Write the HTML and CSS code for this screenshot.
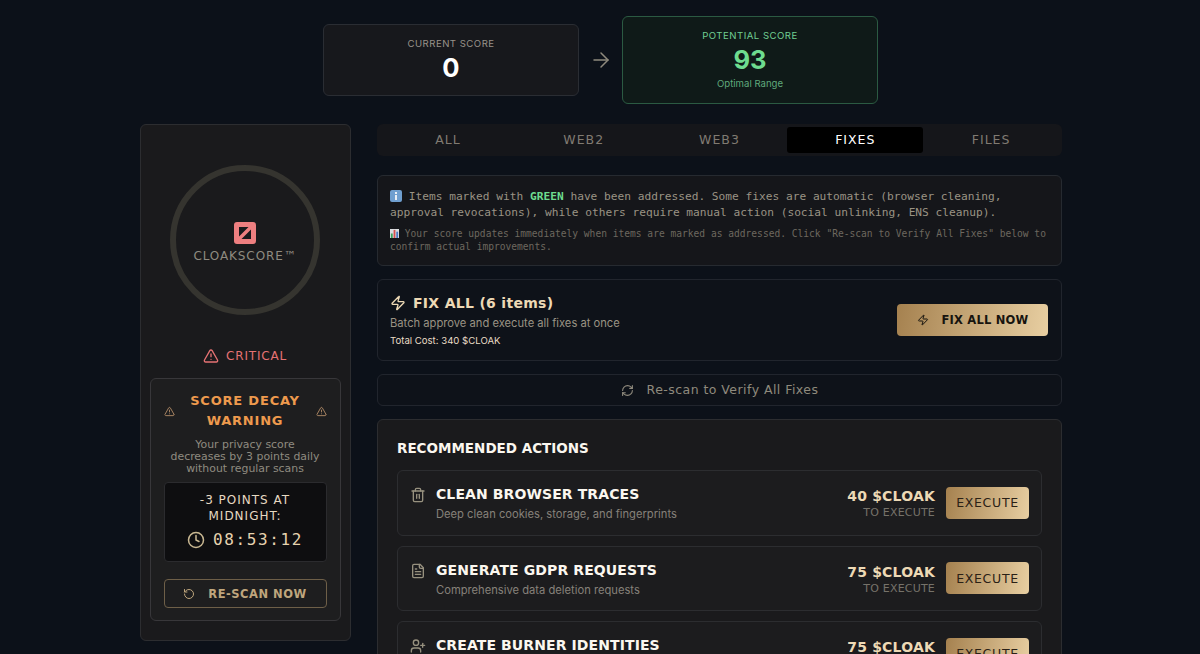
FILE: index.html
```html
<!DOCTYPE html>
<html lang="en">
<head>
<meta charset="utf-8">
<title>CloakScore</title>
<link rel="stylesheet" href="styles.css">
</head>
<body>
<svg class="defs" width="0" height="0" aria-hidden="true">
  <symbol id="zap" viewBox="0 0 24 24"><path d="M4 14a1 1 0 0 1-.78-1.63l9.9-10.2a.5.5 0 0 1 .86.46l-1.92 6.02A1 1 0 0 0 13 10h7a1 1 0 0 1 .78 1.63l-9.9 10.2a.5.5 0 0 1-.86-.46l1.92-6.02A1 1 0 0 0 11 14z"/></symbol>
  <symbol id="alert" viewBox="0 0 24 24"><path d="m21.73 18-8-14a2 2 0 0 0-3.48 0l-8 14A2 2 0 0 0 4 21h16a2 2 0 0 0 1.73-3"/><path d="M12 9v4"/><path d="M12 17h.01"/></symbol>
  <symbol id="ccw" viewBox="0 0 24 24"><path d="M3 12a9 9 0 1 0 9-9 9.75 9.75 0 0 0-6.74 2.74L3 8"/><path d="M3 3v5h5"/></symbol>
</svg>
<main class="page">
  <section class="scores">
    <div class="score-card">
      <div class="score-label">CURRENT SCORE</div>
      <div class="score-value">0</div>
    </div>
    <svg class="icon arrow" viewBox="0 0 24 24"><path d="M5 12h14"/><path d="m12 5 7 7-7 7"/></svg>
    <div class="score-card potential">
      <div class="score-label">POTENTIAL SCORE</div>
      <div class="score-value">93</div>
      <div class="score-note">Optimal Range</div>
    </div>
  </section>

  <div class="columns">
    <aside class="side">
      <div class="ring">
        <div class="logo"><svg viewBox="0 0 22 22"><path class="logo-cut" d="M5 5h9.5L5 14.5zM17 7.500V17H7.500z"/></svg></div>
        <div class="ring-label">CLOAKSCORE™</div>
      </div>
      <div class="status"><svg class="icon status-icon"><use href="#alert"/></svg><span>CRITICAL</span></div>
      <div class="decay">
        <div class="decay-head">
          <svg class="icon decay-icon"><use href="#alert"/></svg>
          <h3>SCORE DECAY WARNING</h3>
          <svg class="icon decay-icon"><use href="#alert"/></svg>
        </div>
        <p class="decay-text">Your privacy score<br>decreases by 3 points daily<br>without regular scans</p>
        <div class="timer-box">
          <div class="timer-label">-3 POINTS AT MIDNIGHT:</div>
          <div class="timer">
            <svg class="icon clock" viewBox="0 0 24 24"><circle cx="12" cy="12" r="10"/><polyline points="12 6 12 12 16 14"/></svg>
            <span>08:53:12</span>
          </div>
        </div>
        <button class="rescan-now"><svg class="icon rescan-icon"><use href="#ccw"/></svg><span>RE-SCAN NOW</span></button>
      </div>
    </aside>

    <div class="content">
      <nav class="tabs">
        <div class="tab">ALL</div>
        <div class="tab">WEB2</div>
        <div class="tab">WEB3</div>
        <div class="tab active">FIXES</div>
        <div class="tab">FILES</div>
      </nav>

      <div class="info">
        <p class="info-main"><svg class="emoji" viewBox="0 0 12 12"><rect width="12" height="12" rx="2" fill="#6f9fd0"/><rect x="5" y="2" width="2" height="2" fill="#e8eef5"/><rect x="5" y="5" width="2" height="5" fill="#e8eef5"/></svg> Items marked with <strong>GREEN</strong> have been addressed. Some fixes are automatic (browser cleaning, approval revocations), while others require manual action (social unlinking, ENS cleanup).</p>
        <p class="info-sub"><svg class="emoji small" viewBox="0 0 10 10"><rect width="10" height="10" fill="#d9dde0"/><rect x="1" y="5" width="2" height="5" fill="#3aa35c"/><rect x="4" y="1" width="2" height="9" fill="#d8504e"/><rect x="7" y="3" width="2" height="7" fill="#4a79c4"/></svg> Your score updates immediately when items are marked as addressed. Click "Re-scan to Verify All Fixes" below to confirm actual improvements.</p>
      </div>

      <div class="fixall">
        <div class="fixall-text">
          <h2><svg class="icon fixall-icon"><use href="#zap"/></svg>FIX ALL (6 items)</h2>
          <p class="fixall-desc">Batch approve and execute all fixes at once</p>
          <p class="fixall-cost">Total Cost: 340 $CLOAK</p>
        </div>
        <button class="gold fixall-btn"><svg class="icon fixbtn-icon"><use href="#zap"/></svg><span>FIX ALL NOW</span></button>
      </div>

      <button class="verify">
        <svg class="icon verify-icon" viewBox="0 0 24 24"><path d="M3 12a9 9 0 0 1 9-9 9.75 9.75 0 0 1 6.74 2.74L21 8"/><path d="M21 3v5h-5"/><path d="M21 12a9 9 0 0 1-9 9 9.75 9.750 0 0 1-6.74-2.74L3 16"/><path d="M8 16H3v5"/></svg>
        <span>Re-scan to Verify All Fixes</span>
      </button>

      <section class="actions">
        <h2 class="actions-title">RECOMMENDED ACTIONS</h2>
        <div class="action">
          <svg class="icon action-icon" viewBox="0 0 24 24"><path d="M3 6h18"/><path d="M19 6v14c0 1-1 2-2 2H7c-1 0-2-1-2-2V6"/><path d="M8 6V4c0-1 1-2 2-2h4c1 0 2 1 2 2v2"/><line x1="10" x2="10" y1="11" y2="17"/><line x1="14" x2="14" y1="11" y2="17"/></svg>
          <div class="action-text"><h4>CLEAN BROWSER TRACES</h4><p>Deep clean cookies, storage, and fingerprints</p></div>
          <div class="price"><b>40 $CLOAK</b><small>TO EXECUTE</small></div>
          <button class="gold execute">EXECUTE</button>
        </div>
        <div class="action">
          <svg class="icon action-icon" viewBox="0 0 24 24"><path d="M15 2H6a2 2 0 0 0-2 2v16a2 2 0 0 0 2 2h12a2 2 0 0 0 2-2V7Z"/><path d="M14 2v4a2 2 0 0 0 2 2h4"/><path d="M10 9H8"/><path d="M16 13H8"/><path d="M16 17H8"/></svg>
          <div class="action-text"><h4>GENERATE GDPR REQUESTS</h4><p>Comprehensive data deletion requests</p></div>
          <div class="price"><b>75 $CLOAK</b><small>TO EXECUTE</small></div>
          <button class="gold execute">EXECUTE</button>
        </div>
        <div class="action">
          <svg class="icon action-icon" viewBox="0 0 24 24"><path d="M16 21v-2a4 4 0 0 0-4-4H6a4 4 0 0 0-4 4v2"/><circle cx="9" cy="7" r="4"/><line x1="19" x2="19" y1="8" y2="14"/><line x1="22" x2="16" y1="11" y2="11"/></svg>
          <div class="action-text"><h4>CREATE BURNER IDENTITIES</h4><p>Fresh aliases and wallets</p></div>
          <div class="price"><b>75 $CLOAK</b><small>TO EXECUTE</small></div>
          <button class="gold execute">EXECUTE</button>
        </div>
      </section>
    </div>
  </div>
</main>
</body>
</html>
```
FILE: styles.css
```css
* { box-sizing: border-box; margin: 0; padding: 0; }
html, body { height: 100%; overflow: hidden; }
body { background: #0c1119; color: #fff; font-family: "Inter", "Noto Sans", sans-serif; }
button { font: inherit; cursor: pointer; }
.defs { position: absolute; }
.icon { fill: none; stroke: currentColor; stroke-width: 2; stroke-linecap: round; stroke-linejoin: round; flex: none; display: block; }

.page { width: 922px; margin: 0 auto; padding: 16px 0 0 0; position: relative; left: 1px; }

.scores { display: flex; align-items: center; justify-content: center; gap: 9.5px; height: 88px; margin-bottom: 20px; padding-right: 1px; }
.score-card { width: 256px; height: 72px; background: #17181c; border: 1px solid #2a2d33; border-radius: 6px; display: flex; flex-direction: column; align-items: center; justify-content: center; }
.score-card.potential { height: 88px; background: #0f1a18; border-color: #2b5a42; }
.score-label { font-size: 9.6px; letter-spacing: .48px; color: #97928a; line-height: 13px; margin-bottom: 2px; }
.score-value { font-size: 25.6px; font-weight: 700; line-height: 30px; margin-top: 1px; }
.potential .score-label { color: #6fce92; }
.potential .score-value { color: #6edc8f; }
.score-note { font-size: 9.6px; color: #5fa97c; line-height: 14px; margin-top: 2px; }
.arrow { width: 24px; height: 24px; color: #8f8a7d; stroke-width: 1.500; }

.columns { display: flex; gap: 26px; align-items: flex-start; }
.side { width: 211px; height: 517px; flex: none; background: #1a1a1c; border: 1px solid #2c2d30; border-radius: 6px; padding: 40px 10px 0 9px; display: flex; flex-direction: column; align-items: center; }
.ring { width: 150px; height: 150px; border-radius: 50%; border: 6px solid #35342f; padding-top: 5px; display: flex; flex-direction: column; align-items: center; justify-content: center; flex: none; }
.logo { width: 22px; height: 22px; background: #ee7f80; border-radius: 3px; }
.logo svg { display: block; width: 22px; height: 22px; }
.logo-cut { fill: #1a1a1c; }
.ring-label { font-family: "DejaVu Sans", sans-serif; font-size: 12px; letter-spacing: .9px; color: #8f8b80; margin-top: 5px; line-height: 14px; white-space: nowrap; }
.status { display: flex; align-items: center; gap: 7px; margin-top: 33px; height: 16px; color: #e57273; font-family: "DejaVu Sans", sans-serif; font-size: 12px; letter-spacing: .8px; }
.status-icon { width: 16px; height: 16px; }
.decay { width: 191px; height: 243px; margin-top: 14px; flex: none; border: 1px solid #38373a; border-radius: 6px; background: #1e1e1f; padding: 12px 13px 0; display: flex; flex-direction: column; align-items: stretch; }
.decay-head { display: flex; align-items: center; justify-content: space-between; }
.decay-head h3 { width: 130px; text-align: center; font-family: "DejaVu Sans", sans-serif; font-size: 13px; letter-spacing: .8px; font-weight: 700; line-height: 20px; color: #ee9a4d; }
.decay-icon { width: 11px; height: 11px; color: #b08a66; }
.decay-text { font-family: "DejaVu Sans", sans-serif; font-size: 10.900px; line-height: 12px; color: #8f8b80; text-align: center; margin-top: 8px; white-space: nowrap; }
.timer-box { height: 80px; margin-top: 7px; flex: none; background: #0e0e10; border: 1px solid #2b2b2e; border-radius: 4px; padding: 9px 4px 0; text-align: center; }
.timer-label { font-family: "DejaVu Sans", sans-serif; font-size: 12px; letter-spacing: 1px; line-height: 16px; color: #e6d9c2; }
.timer { display: flex; align-items: center; justify-content: center; gap: 8px; margin-top: 4px; font-family: "DejaVu Sans Mono", monospace; font-size: 16px; letter-spacing: 1.600px; color: #e6d3af; line-height: 24px; }
.clock { width: 18px; height: 18px; color: #c9b892; }
.rescan-now { height: 29px; margin-top: 17px; flex: none; display: flex; align-items: center; justify-content: center; gap: 13px; background: transparent; border: 1px solid #6e5f48; border-radius: 4px; color: #bfa67d; font-family: "DejaVu Sans", sans-serif; font-size: 11.500px; letter-spacing: .5px; font-weight: 700; }
.rescan-icon { width: 12px; height: 12px; }

.content { width: 685px; flex: none; }
.tabs { display: grid; grid-template-columns: repeat(5, 1fr); height: 32px; padding: 3px; gap: 0; background: #15161a; border-radius: 6px; margin-bottom: 19px; }
.tab { display: flex; align-items: center; justify-content: center; padding-bottom: 1px; font-family: "DejaVu Sans", sans-serif; font-size: 12.500px; letter-spacing: 1px; color: #807b72; border-radius: 3px; }
.tab.active { background: #000; color: #fff; }

.info { height: 91px; background: #15161a; border: 1px solid #262a30; border-radius: 6px; padding: 12px 12px; margin-bottom: 13px; font-family: "DejaVu Sans Mono", monospace; }
.info-main { font-size: 11.200px; line-height: 16px; margin-top: 1px; color: #9a9384; }
.info-main strong { color: #6edc8f; font-weight: 700; }
.info-sub { font-size: 9.600px; line-height: 13px; color: #6d685f; margin-top: 6px; }
.emoji { width: 12px; height: 12px; display: inline-block; vertical-align: -2px; }
.emoji.small { width: 9px; height: 9px; vertical-align: -1px; }

.fixall { height: 82px; border: 1px solid #21252d; border-radius: 6px; padding: 0 13px 0 12px; margin-bottom: 13px; display: flex; align-items: center; justify-content: space-between; background: #0e1219; }
.fixall h2 { display: flex; align-items: center; gap: 7px; font-family: "DejaVu Sans", sans-serif; font-size: 14px; letter-spacing: .3px; font-weight: 700; line-height: 20px; color: #edd9b5; }
.fixall-icon { width: 16px; height: 16px; }
.fixall-desc { font-size: 11.200px; line-height: 16px; color: #9a9384; margin-top: 2px; }
.fixall-cost { font-size: 9.600px; line-height: 14px; color: #e8dcc6; margin-top: 3px; }
.gold { background: linear-gradient(100deg, #a5814f, #e8cfa2); border: 0; border-radius: 4px; color: #17140f; font-family: "DejaVu Sans", sans-serif; }
.fixall-btn { width: 151px; height: 32px; display: flex; align-items: center; justify-content: center; gap: 13px; font-size: 11.500px; letter-spacing: .2px; font-weight: 700; }
.fixbtn-icon { width: 12px; height: 12px; }

.verify { width: 100%; height: 32px; background: #0e1219; border: 1px solid #21252d; border-radius: 6px; margin-bottom: 13px; padding-bottom: 2px; display: flex; align-items: center; justify-content: center; gap: 13px; color: #8f8a7d; font-family: "DejaVu Sans", sans-serif; font-size: 12.500px; letter-spacing: .45px; }
.verify-icon { width: 13px; height: 13px; margin-top: 2px; }

.actions { background: #1a1a1c; border: 1px solid #2c2d30; border-radius: 6px; padding: 18px 19px 20px; }
.actions-title { font-family: "DejaVu Sans", sans-serif; font-size: 13.500px; font-weight: 700; line-height: 20px; color: #fbf7ef; margin-bottom: 12px; }
.action { height: 65.500px; margin-bottom: 10px; border: 1px solid #2c2d30; border-radius: 6px; padding: 0 12px; display: flex; align-items: center; background: #1c1c1e; }
.action-icon { width: 16px; height: 16px; color: #97917f; margin-right: 10px; align-self: flex-start; margin-top: 16px; }
.action-text { flex: 1; }
.action-text h4 { font-family: "DejaVu Sans", sans-serif; font-size: 14px; letter-spacing: .1px; font-weight: 700; line-height: 20px; color: #fbf7ef; margin-top: 1px; }
.action-text p { font-size: 11.200px; line-height: 16px; color: #86817a; margin-top: 2px; }
.price { display: flex; flex-direction: column; align-items: flex-end; margin-right: 11px; margin-top: 4px; font-family: "DejaVu Sans", sans-serif; }
.price b { font-size: 14px; letter-spacing: .2px; line-height: 16px; color: #edd9b5; }
.price small { font-size: 11px; letter-spacing: .2px; line-height: 16px; color: #76726a; margin-top: 1px; }
.execute { width: 83px; height: 32px; font-size: 12.500px; letter-spacing: .7px; color: #2a2116; }
```
